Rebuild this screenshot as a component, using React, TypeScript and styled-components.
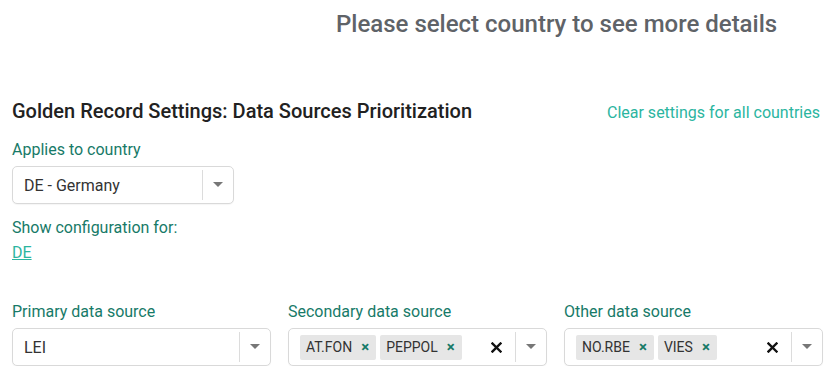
import React from "react"
import styled, { createGlobalStyle } from "styled-components"

const GlobalStyle = createGlobalStyle`
  body {
    margin: 0;
    background: #ffffff;
    font-family: Roboto, "Liberation Sans", sans-serif;
  }
`

interface SourceColumn {
  label: string
  value?: string
  chips?: string[]
}

const columns: SourceColumn[] = [
  { label: "Primary data source", value: "LEI" },
  { label: "Secondary data source", chips: ["AT.FON", "PEPPOL"] },
  { label: "Other data source", chips: ["NO.RBE", "VIES"] },
]

const Arrow = () => (
  <svg width="10" height="6" viewBox="0 0 10 6">
    <path d="M0 0 L10 0 L5 5 Z" fill="#777" />
  </svg>
)

const SelectBox = ({ children, clearable }: { children: React.ReactNode; clearable?: boolean }) => (
  <Select>
    <SelectValue>{children}</SelectValue>
    {clearable && (
      <ClearIcon>
        <svg width="11" height="11" viewBox="0 0 11 11">
          <path d="M1.5 1.5 L9.5 9.5 M9.5 1.5 L1.5 9.5" stroke="#111" strokeWidth="2.4" strokeLinecap="square" />
        </svg>
      </ClearIcon>
    )}
    <Indicator>
      <Arrow />
    </Indicator>
  </Select>
)

const App = () => {
  return (
    <>
      <GlobalStyle />
      <Page>
        <Notice>Please select country to see more details</Notice>
        <HeaderRow>
          <Heading>Golden Record Settings: Data Sources Prioritization</Heading>
          <ClearLink>Clear settings for all countries</ClearLink>
        </HeaderRow>
        <Label>Applies to country</Label>
        <CountrySelect>
          <SelectBox>DE - Germany</SelectBox>
        </CountrySelect>
        <ConfigLabel>Show configuration for:</ConfigLabel>
        <CountryLink>DE</CountryLink>
        <SourcesGrid>
          {columns.map((col) => (
            <div key={col.label}>
              <Label>{col.label}</Label>
              <SelectBox clearable={!!col.chips}>
                {col.chips
                  ? col.chips.map((c) => (
                      <Chip key={c}>
                        {c}
                        <ChipRemove>×</ChipRemove>
                      </Chip>
                    ))
                  : col.value}
              </SelectBox>
            </div>
          ))}
        </SourcesGrid>
      </Page>
    </>
  )
}

const Page = styled.div`
  padding: 10px 4px 0 12px;
  width: 827px;
  box-sizing: border-box;
`

const Notice = styled.div`
  font-size: 24px;
  font-weight: 500;
  color: #5f6368;
  padding-left: 324px;
  line-height: 28px;
`

const HeaderRow = styled.div`
  display: flex;
  justify-content: space-between;
  align-items: baseline;
  margin-top: 61px;
  padding-right: 3px;
`

const Heading = styled.h2`
  margin: 0;
  font-size: 20px;
  font-weight: 500;
  color: #212121;
  line-height: 24px;
`

const ClearLink = styled.a`
  font-size: 16px;
  color: #2bb59f;
  cursor: pointer;
`

const Label = styled.div`
  font-size: 16px;
  color: #177a68;
  line-height: 20px;
  margin: 17px 0 6px;
`

const CountrySelect = styled.div`
  width: 222px;
`

const Select = styled.div`
  display: flex;
  align-items: center;
  height: 38px;
  box-sizing: border-box;
  border: 1px solid #d9d9d9;
  border-radius: 5px;
  background: #fff;
  box-shadow: 0 1px 1px rgba(0, 0, 0, 0.04);
`

const SelectValue = styled.div`
  flex: 1;
  display: flex;
  align-items: center;
  gap: 4px;
  padding-left: 11px;
  font-size: 16px;
  color: #333;
`

const ClearIcon = styled.div`
  display: flex;
  align-items: center;
  padding: 0 13px 0 10px;
`

const Indicator = styled.div`
  display: flex;
  align-items: center;
  justify-content: center;
  width: 30px;
  height: 30px;
  border-left: 1px solid #dcdcdc;
`

const Chip = styled.span`
  display: inline-flex;
  align-items: center;
  height: 25px;
  padding: 0 7px 0 6px;
  background: #e6e6e6;
  border-radius: 2px;
  font-size: 14px;
  color: #333;
`

const ChipRemove = styled.span`
  margin-left: 9px;
  color: #177a68;
  font-weight: 700;
  font-size: 15px;
`

const ConfigLabel = styled(Label)`
  margin: 14px 0 5px;
`

const CountryLink = styled.a`
  display: inline-block;
  font-size: 16px;
  color: #2bb59f;
  text-decoration: underline;
  line-height: 20px;
  cursor: pointer;
`

const SourcesGrid = styled.div`
  display: grid;
  grid-template-columns: repeat(3, 259px);
  column-gap: 17px;
  margin-top: 22px;
`

export default App
